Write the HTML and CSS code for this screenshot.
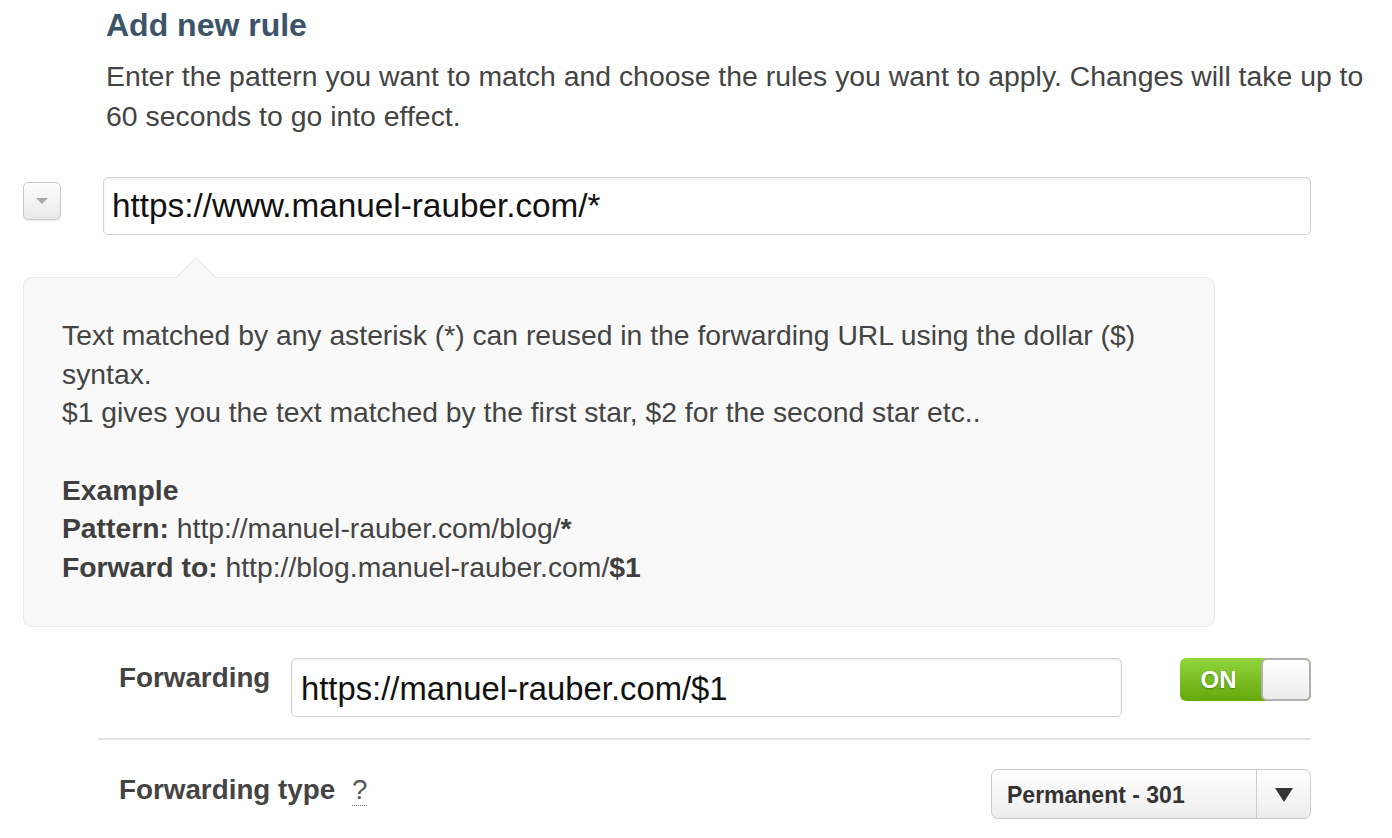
FILE: index.html
```
<!DOCTYPE html>
<html>
<head>
<meta charset="utf-8">
<link rel="stylesheet" href="styles.css">
</head>
<body>
<div class="page">
  <h2 class="title">Add new rule</h2>
  <p class="lead">Enter the pattern you want to match and choose the rules you want to apply. Changes will take up to 60 seconds to go into effect.</p>

  <div class="pattern-row">
    <button class="mini-btn" type="button"><span class="mini-caret"></span></button>
    <div class="text-input pattern-input">https://www.manuel-rauber.com/*</div>
  </div>

  <div class="popover">
    <span class="popover-arrow"></span>
    <p class="pop-text">Text matched by any asterisk (*) can reused in the forwarding URL using the dollar ($) syntax.<br>$1 gives you the text matched by the first star, $2 for the second star etc..</p>
    <p class="pop-text pop-example"><b>Example</b><br><b>Pattern:</b> http://manuel-rauber.com/blog/<b>*</b><br><b>Forward to:</b> http://blog.manuel-rauber.com/<b>$1</b></p>
  </div>

  <div class="fwd-row">
    <div class="row-label">Forwarding</div>
    <div class="text-input fwd-input">https://manuel-rauber.com/$1</div>
    <div class="toggle">
      <span class="toggle-on">ON</span>
      <span class="toggle-knob"></span>
    </div>
  </div>

  <div class="divider"></div>

  <div class="type-row">
    <div class="row-label">Forwarding type <span class="help">?</span></div>
    <div class="select">
      <span class="select-value">Permanent - 301</span>
      <span class="select-arrow"><span class="tri"></span></span>
    </div>
  </div>
</div>
</body>
</html>
```

FILE: styles.css
```
html, body {
  margin: 0;
  padding: 0;
  background: #ffffff;
}

body {
  font-family: "Liberation Sans", Arial, Helvetica, sans-serif;
  color: #444444;
  width: 1392px;
  height: 838px;
  overflow: hidden;
}

.page {
  display: flex;
  flex-direction: column;
}

.title {
  margin: 5px 0 0 106px;
  font-size: 32px;
  line-height: 40px;
  font-weight: bold;
  color: #3c5469;
}

.lead {
  margin: 11px 0 0 106px;
  width: 1280px;
  font-size: 28.4px;
  line-height: 40px;
  color: #444444;
}

.pattern-row {
  display: flex;
  align-items: flex-start;
  margin-top: 41px;
  padding-left: 23px;
  gap: 42px;
}

.mini-btn {
  margin-top: 5px;
  width: 38px;
  height: 38px;
  padding: 0;
  border: 1px solid #c9c9c9;
  border-radius: 5px;
  background: linear-gradient(#fdfdfd, #e9e9e9);
  box-shadow: 0 1px 1px rgba(0,0,0,0.08);
  display: flex;
  align-items: center;
  justify-content: center;
}

.mini-caret {
  width: 0;
  height: 0;
  border-left: 6px solid transparent;
  border-right: 6px solid transparent;
  border-top: 6px solid #a8a8a8;
}

.text-input {
  box-sizing: border-box;
  border: 1px solid #d2d2d2;
  border-radius: 5px;
  background: #ffffff;
  box-shadow: inset 0 2px 3px rgba(0,0,0,0.06);
  font-size: 33px;
  color: #111111;
  display: flex;
  align-items: center;
  white-space: nowrap;
}

.pattern-input {
  width: 1208px;
  height: 58px;
  padding-left: 8px;
  font-size: 33.3px;
}

.popover {
  position: relative;
  box-sizing: border-box;
  margin: 42px 0 0 23px;
  width: 1192px;
  height: 350px;
  padding: 38px 38px 0 38px;
  background: #f9f9f9;
  border: 1px solid #e9e9e9;
  border-radius: 9px;
}

.popover-arrow {
  position: absolute;
  left: 158px;
  top: -15px;
  width: 27px;
  height: 27px;
  background: #f9f9f9;
  border-left: 1px solid #e6e6e6;
  border-top: 1px solid #e6e6e6;
  transform: rotate(45deg);
}

.pop-text {
  margin: 0;
  font-size: 28.3px;
  line-height: 38.5px;
  color: #444444;
}

.pop-example {
  margin-top: 39px;
}

.pop-text b {
  color: #3f3f3f;
}

.fwd-row {
  display: flex;
  align-items: flex-start;
  margin-top: 31px;
  padding-left: 119px;
}

.row-label {
  font-size: 27.8px;
  line-height: 40px;
  font-weight: bold;
  color: #444444;
  white-space: nowrap;
}

.fwd-row .row-label {
  width: 172px;
  margin-top: 0;
}

.fwd-input {
  width: 831px;
  height: 59px;
  padding-left: 9px;
  padding-top: 2px;
  font-size: 32.8px;
}

.toggle {
  margin-left: 58px;
  width: 131px;
  height: 43px;
  box-sizing: border-box;
  border-radius: 6px;
  background: linear-gradient(#92d63e, #64a80c);
  display: flex;
  align-items: center;
  overflow: hidden;
}

.toggle-on {
  flex: 1;
  text-align: center;
  font-size: 24px;
  font-weight: bold;
  color: #ffffff;
  text-shadow: 0 1px 2px rgba(40,80,0,0.6);
  padding-right: 4px;
}

.toggle-knob {
  box-sizing: border-box;
  width: 50px;
  height: 43px;
  border: 2px solid #b0b0b0;
  border-radius: 6px;
  background: linear-gradient(#ffffff, #ececec);
}

.divider {
  margin: 21px 0 0 98px;
  width: 1213px;
  height: 2px;
  background: #e2e2e2;
}

.type-row {
  display: flex;
  align-items: flex-start;
  justify-content: space-between;
  margin-top: 29px;
  margin-left: 119px;
  width: 1192px;
}

.type-row .row-label {
  margin-top: 1px;
}

.help {
  display: inline-block;
  margin-left: 9px;
  font-weight: normal;
  color: #555555;
  line-height: 30px;
  border-bottom: 1px dotted #777777;
}

.select {
  box-sizing: border-box;
  width: 320px;
  height: 50px;
  border: 1px solid #cccccc;
  border-radius: 7px;
  background: linear-gradient(#ffffff, #ededed);
  display: flex;
  align-items: stretch;
}

.select-value {
  flex: 1;
  display: flex;
  align-items: center;
  padding-left: 15px;
  padding-top: 2px;
  font-size: 23px;
  font-weight: bold;
  color: #333333;
}

.select-arrow {
  width: 53px;
  border-left: 1px solid #cccccc;
  display: flex;
  align-items: center;
  justify-content: center;
}

.tri {
  width: 0;
  height: 0;
  border-left: 9px solid transparent;
  border-right: 9px solid transparent;
  border-top: 14px solid #333333;
  margin-top: 2px;
}
```
